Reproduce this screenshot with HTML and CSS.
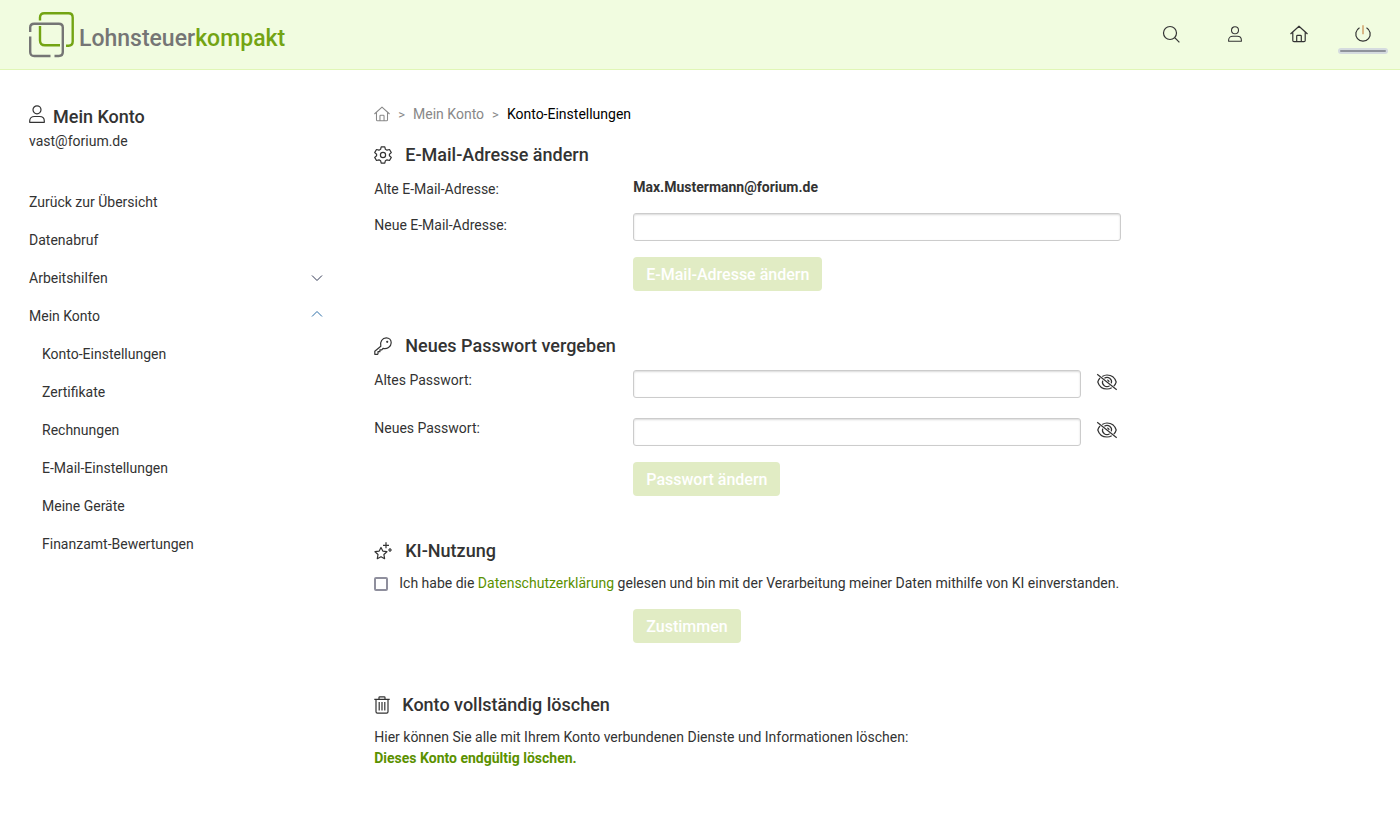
FILE: index.html
```html
<!DOCTYPE html>
<html lang="de">
<head>
    <meta charset="UTF-8">
    <meta name="viewport" content="width=device-width, initial-scale=1.0">
    <title>Konto-Einstellungen</title>
    <link rel="stylesheet" href="styles.css">
</head>
<body>

    <!-- Icons, die mehrfach verwendet werden -->
    <svg class="sprite" aria-hidden="true">
        <symbol id="icon-user" viewBox="0 0 16 18">
            <circle cx="8" cy="4.800" r="4"/>
            <path d="M.7 17.300v-1.300c0-2.700 2-4.500 4.700-4.500h5.200c2.700 0 4.700 1.800 4.700 4.500v1.300z"/>
        </symbol>
        <symbol id="icon-home" viewBox="0 0 18 18">
            <path d="M.5 9 9 1.200 17.500 9M2.800 7.500v7.900c0 .7.500 1.200 1.200 1.200h10c.7 0 1.200-.5 1.200-1.200V7.500M6.700 16.500v-5.300c0-.5.300-.8.800-.8h3c.5 0 .8.300.8.800v5.300"/>
        </symbol>
        <symbol id="icon-eye-off" viewBox="0 0 22 18">
            <path d="M1.200 1.300l19.500 15.500M6.300 3.500C7.700 2.500 9.300 2 11 2c4.700 0 8 3 9.200 7-.5 1.700-1.300 3.100-2.400 4.200M15.700 14.700c-1.400.9-3 1.300-4.700 1.300-4.700 0-8-3-9.200-7 .4-1.500 1.200-2.900 2.200-4M8.400 5.300A4.500 4.500 0 0 1 15.300 10.400M13.600 12.700A4.500 4.500 0 0 1 6.700 7.600M11 7a2 2 0 0 1 2 2"/>
        </symbol>
    </svg>

    <header>
        <a class="logo" href="#">
            <svg class="logo-mark" viewBox="0 0 46 46" aria-hidden="true">
                <path class="logo-green" d="M11 8.500V5.500Q11 1.300 15.200 1.300H39.500Q43.700 1.300 43.700 5.500V29.500Q43.700 33.700 39.500 33.700H37M31 33.200H16Q11 33.200 11 28.500V14"/>
                <path class="logo-grey" d="M1.200 20V15.500Q1.200 11.700 5.200 11.700H29.800Q33.800 11.700 33.800 15.500V40Q33.800 44 29.800 44H25.500M21.500 44H5.200Q1.200 44 1.200 40V24.500"/>
            </svg>
            <span>Lohnsteuer<b>kompakt</b></span>
        </a>
        <nav class="top-nav">
            <a href="#" aria-label="Suche">
                <svg class="icon" viewBox="0 0 18 18"><circle cx="8" cy="8" r="6.500"/><path d="M12.700 12.700l4.700 4.700"/></svg>
            </a>
            <a href="#" aria-label="Mein Konto"><svg class="icon icon-small"><use href="#icon-user"/></svg></a>
            <a href="#" aria-label="Startseite"><svg class="icon"><use href="#icon-home"/></svg></a>
            <a href="#" aria-label="Abmelden">
                <svg class="icon" viewBox="0 0 18 18"><path d="M5.500 2.700a7.200 7.200 0 1 0 7 0"/><path class="power-line" d="M9 .3v9"/></svg>
                <span class="session-bar"></span>
            </a>
        </nav>
    </header>

    <div class="page">
        <aside>
            <div class="account">
                <svg class="icon icon-account"><use href="#icon-user"/></svg>
                <h2>Mein Konto</h2>
            </div>
            <div>vast@forium.de</div>
            <nav>
                <ul class="menu">
                    <li><a href="#">Zurück zur Übersicht</a></li>
                    <li><a href="#">Datenabruf</a></li>
                    <li><a href="#">Arbeitshilfen <svg class="chevron" viewBox="0 0 12 8"><path d="M1 1.500l5 5 5-5"/></svg></a></li>
                    <li>
                        <a href="#">Mein Konto <svg class="chevron chevron-open" viewBox="0 0 12 8"><path d="M1 6.500l5-5 5 5"/></svg></a>
                        <ul class="submenu">
                            <li><a href="#">Konto-Einstellungen</a></li>
                            <li><a href="#">Zertifikate</a></li>
                            <li><a href="#">Rechnungen</a></li>
                            <li><a href="#">E-Mail-Einstellungen</a></li>
                            <li><a href="#">Meine Geräte</a></li>
                            <li><a href="#">Finanzamt-Bewertungen</a></li>
                        </ul>
                    </li>
                </ul>
            </nav>
        </aside>

        <main>
            <nav class="breadcrumb">
                <a href="#" aria-label="Startseite"><svg class="icon icon-crumb"><use href="#icon-home"/></svg></a>
                <span class="separator">&gt;</span>
                <a href="#">Mein Konto</a>
                <span class="separator">&gt;</span>
                <span class="current">Konto-Einstellungen</span>
            </nav>

            <section>
                <h2>
                    <svg class="icon" viewBox="0 0 18 18"><circle cx="9" cy="9" r="2.600"/><path d="M7.200.8h3.600l.6 2.500 1.600.9 2.500-.7 1.800 3.100-1.900 1.700v1.400l1.900 1.700-1.800 3.100-2.500-.7-1.600.9-.6 2.500H7.200l-.6-2.500-1.600-.9-2.500.7-1.800-3.100 1.900-1.700V8.300L.7 6.600l1.800-3.100 2.500.7 1.600-.9z"/></svg>
                    E-Mail-Adresse ändern
                </h2>
                <div class="row row-static">
                    <span class="caption">Alte E-Mail-Adresse:</span>
                    <strong>Max.Mustermann@forium.de</strong>
                </div>
                <div class="row">
                    <label class="caption" for="new-mail">Neue E-Mail-Adresse:</label>
                    <input type="email" id="new-mail">
                </div>
                <div class="row"><button type="button" disabled>E-Mail-Adresse ändern</button></div>
            </section>

            <section>
                <h2>
                    <svg class="icon" viewBox="0 0 18 18"><path d="M6.800 9.300C5.600 5.200 8.300.8 12.300.8c2.800 0 4.900 2.100 4.900 4.900 0 4-4.300 6.800-8.200 5.700l-1.200 1.400H5.900v1.900H4v2.100l-.5.500H.8v-3z"/><circle cx="13.200" cy="4.800" r=".5"/></svg>
                    Neues Passwort vergeben
                </h2>
                <div class="row row-password">
                    <label for="old-password">Altes Passwort:</label>
                    <div class="password">
                        <input type="password" id="old-password">
                        <button type="button" class="toggle" aria-label="Passwort anzeigen"><svg class="icon"><use href="#icon-eye-off"/></svg></button>
                    </div>
                </div>
                <div class="row">
                    <label for="new-password">Neues Passwort:</label>
                    <div class="password">
                        <input type="password" id="new-password">
                        <button type="button" class="toggle" aria-label="Passwort anzeigen"><svg class="icon"><use href="#icon-eye-off"/></svg></button>
                    </div>
                </div>
                <div class="row"><button type="button" disabled>Passwort ändern</button></div>
            </section>

            <section>
                <h2>
                    <svg class="icon" viewBox="0 0 18 18"><path d="M7 5.500l1.800 3.600 4.100.6-3 2.800.7 4.200L7 14.700l-3.700 2 .7-4.200-3-2.800 4.200-.6zM12 .3v6M9 3.300h6M16 6v4M14 8h4"/></svg>
                    KI-Nutzung
                </h2>
                <div class="consent">
                    <input type="checkbox" id="consent">
                    <label for="consent">Ich habe die <a href="#">Datenschutzerklärung</a> gelesen und bin mit der Verarbeitung meiner Daten mithilfe von KI einverstanden.</label>
                </div>
                <div class="row"><button type="button" disabled>Zustimmen</button></div>
            </section>

            <section class="delete">
                <h2>
                    <svg class="icon icon-trash" viewBox="0 0 16 18"><path d="M.3 3.300h15.400M5 3V1.600c0-.5.300-.8.800-.8h4.400c.5 0 .8.300.8.800V3M2 3.300v12.500c0 .8.600 1.400 1.400 1.400h9.200c.8 0 1.400-.6 1.400-1.400V3.300M5.200 6v8.500M8 6v8.500M10.800 6v8.500"/></svg>
                    Konto vollständig löschen
                </h2>
                <p>Hier können Sie alle mit Ihrem Konto verbundenen Dienste und Informationen löschen:<br>
                <a href="#"><b>Dieses Konto endgültig löschen.</b></a></p>
            </section>
        </main>
    </div>

</body>
</html>
```

FILE: styles.css
```css
* {
    box-sizing: border-box;
}

body {
    margin: 0;
    font-family: Roboto, sans-serif;
    font-size: 14px;
    line-height: 21px;
    color: #333;
    background-color: #fff;
}

a {
    color: #5b9100;
    text-decoration: none;
}

h2 {
    margin: 0;
    font-size: 18px;
    line-height: 24px;
    font-weight: 500;
}

.sprite {
    display: none;
}

.icon {
    width: 18px;
    height: 18px;
    flex: none;
    fill: none;
    stroke: #333;
    stroke-width: 1.2;
    stroke-linejoin: round;
}

/* Kopfzeile */
header {
    display: flex;
    justify-content: space-between;
    height: 70px;
    padding: 0 5px 0 29px;
    background-color: #f1fce0;
    border-bottom: 1px solid #e0f6b6;
}

.logo {
    display: flex;
    gap: 4px;
    padding-top: 12px;
    font-size: 23px;
    line-height: 54px;
    font-weight: 500;
    color: #757575;
}

.logo b {
    font-weight: 500;
    color: #73a413;
}

.logo-mark {
    width: 46px;
    height: 46px;
    fill: none;
    stroke-width: 2.4;
}

.logo-green {
    stroke: #73a413;
}

.logo-grey {
    stroke: #757575;
}

.top-nav {
    display: flex;
}

.top-nav a {
    display: flex;
    flex-direction: column;
    align-items: center;
    width: 64px;
    padding-top: 25px;
}

.icon-small {
    width: 14px;
}

.power-line {
    stroke: #c98a4b;
}

.session-bar {
    width: 50px;
    height: 6px;
    margin-top: 5px;
    background-color: #8f939b;
    border: 2px solid #d5dbdf;
    border-radius: 3px;
}

/* Seitenaufteilung */
.page {
    display: flex;
    padding: 34px 5px 48px 14px;
}

aside {
    width: 25%;
    padding: 0 15px;
}

main {
    flex: 1;
    min-width: 0;
    padding-left: 15px;
}

.account {
    display: flex;
    gap: 8px;
    height: 27px;
}

.account h2 {
    line-height: 26px;
}

.icon-account {
    width: 16px;
    height: 20px;
}

.menu,
.submenu {
    margin: 0;
    padding: 0;
    list-style: none;
}

.menu {
    padding-top: 31px;
}

.menu a {
    display: flex;
    justify-content: space-between;
    align-items: center;
    height: 38px;
    color: #333;
}

.submenu {
    padding-left: 13px;
}

.chevron {
    width: 12px;
    height: 8px;
    margin-right: 21px;
    fill: none;
    stroke: #333a55;
}

.chevron-open {
    margin-bottom: 4px;
    stroke: #2d6fa8;
}

.breadcrumb {
    display: flex;
    gap: 8px;
    margin-bottom: 18px;
}

.breadcrumb a,
.separator {
    color: #888;
}

.separator {
    font-size: 13px;
}

.current {
    color: #000;
}

.icon-crumb {
    display: block;
    width: 16px;
    height: 20px;
    stroke: #888;
}

/* Formulare */
section {
    margin-bottom: 43px;
}

section h2 {
    display: flex;
    align-items: center;
    gap: 13px;
    margin-bottom: 10px;
}

.row {
    display: grid;
    grid-template-columns: 259px minmax(0, 488px);
    margin-bottom: 16px;
}

.row-static {
    margin-bottom: 13px;
}

.row-password {
    margin-top: 12px;
    margin-bottom: 20px;
}

.caption {
    padding-top: 2px;
}

.row > button {
    grid-column: 2;
    justify-self: start;
    height: 34px;
    padding: 0 13px;
    font-family: inherit;
    font-size: 16px;
    font-weight: 500;
    color: #fff;
    background-color: #e1ecc4;
    border: none;
    border-radius: 4px;
}

.row input {
    width: 100%;
    height: 28px;
    padding: 0 6px;
    font: inherit;
    background-color: #fff;
    border: 1px solid #ccc;
    border-radius: 3px;
    box-shadow: inset 0 1px 2px rgba(0, 0, 0, 0.15);
}

.password {
    display: flex;
    gap: 15px;
    padding-right: 3px;
}

.toggle {
    padding: 0;
    background: none;
    border: none;
    cursor: pointer;
}

.toggle .icon {
    display: block;
    width: 22px;
    margin-bottom: 4px;
}

.consent {
    display: flex;
    gap: 11px;
    margin-bottom: 15px;
}

.consent input {
    appearance: none;
    flex: none;
    width: 14px;
    height: 14px;
    margin: 4px 0 0;
    background-color: #fff;
    border: 2px solid #8f8f9d;
    border-radius: 2px;
}

.delete {
    margin: 50px 0 0;
}

.delete h2 {
    gap: 12px;
}

.icon-trash {
    width: 16px;
}

p {
    margin: 0;
}
```
